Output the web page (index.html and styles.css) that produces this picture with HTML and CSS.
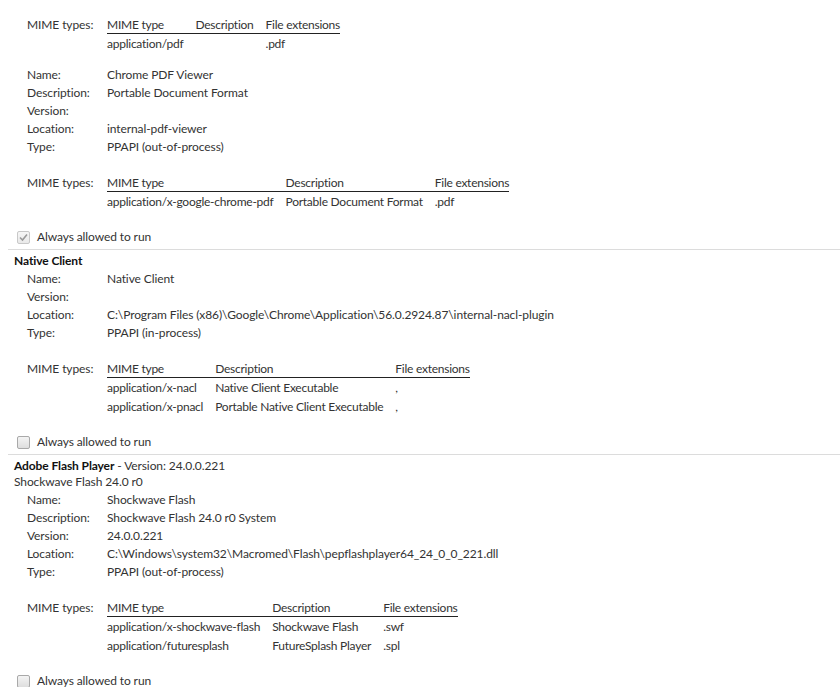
FILE: index.html
```
<!DOCTYPE html>
<html lang="en">
<head>
    <meta charset="UTF-8">
    <title>Plugins</title>
    <link rel="stylesheet" href="styles.css">
</head>
<body>
    <div class="plugin first">
        <div class="mime-row">
            <div class="label">MIME types:</div>
            <table class="mime-table">
                <tr><th>MIME type</th><th>Description</th><th>File extensions</th></tr>
                <tr><td>application/pdf</td><td></td><td>.pdf</td></tr>
            </table>
        </div>

        <div class="details">
            <div class="row"><div class="label">Name:</div><div class="value">Chrome PDF Viewer</div></div>
            <div class="row"><div class="label">Description:</div><div class="value">Portable Document Format</div></div>
            <div class="row"><div class="label">Version:</div><div class="value"></div></div>
            <div class="row"><div class="label">Location:</div><div class="value">internal-pdf-viewer</div></div>
            <div class="row"><div class="label">Type:</div><div class="value">PPAPI (out-of-process)</div></div>
        </div>

        <div class="mime-row">
            <div class="label">MIME types:</div>
            <table class="mime-table">
                <tr><th>MIME type</th><th>Description</th><th>File extensions</th></tr>
                <tr><td>application/x-google-chrome-pdf</td><td>Portable Document Format</td><td>.pdf</td></tr>
            </table>
        </div>

        <div class="allow disabled">
            <span class="check checked"><svg width="9" height="9" viewBox="0 0 9 9"><path d="M1 4.5 L3.5 7 L8 1.5" fill="none" stroke="#9a9a9a" stroke-width="1.6"/></svg></span>
            <span>Always allowed to run</span>
        </div>
    </div>

    <div class="plugin">
        <div class="title"><b>Native Client</b></div>
        <div class="details">
            <div class="row"><div class="label">Name:</div><div class="value">Native Client</div></div>
            <div class="row"><div class="label">Version:</div><div class="value"></div></div>
            <div class="row"><div class="label">Location:</div><div class="value">C:\Program Files (x86)\Google\Chrome\Application\56.0.2924.87\internal-nacl-plugin</div></div>
            <div class="row"><div class="label">Type:</div><div class="value">PPAPI (in-process)</div></div>
        </div>

        <div class="mime-row">
            <div class="label">MIME types:</div>
            <table class="mime-table">
                <tr><th>MIME type</th><th>Description</th><th>File extensions</th></tr>
                <tr><td>application/x-nacl</td><td>Native Client Executable</td><td>,</td></tr>
                <tr><td>application/x-pnacl</td><td>Portable Native Client Executable</td><td>,</td></tr>
            </table>
        </div>

        <div class="allow">
            <span class="check"></span>
            <span>Always allowed to run</span>
        </div>
    </div>

    <div class="plugin">
        <div class="title"><b>Adobe Flash Player</b> - Version: 24.0.0.221</div>
        <div class="subtitle">Shockwave Flash 24.0 r0</div>
        <div class="details">
            <div class="row"><div class="label">Name:</div><div class="value">Shockwave Flash</div></div>
            <div class="row"><div class="label">Description:</div><div class="value">Shockwave Flash 24.0 r0 System</div></div>
            <div class="row"><div class="label">Version:</div><div class="value">24.0.0.221</div></div>
            <div class="row"><div class="label">Location:</div><div class="value">C:\Windows\system32\Macromed\Flash\pepflashplayer64_24_0_0_221.dll</div></div>
            <div class="row"><div class="label">Type:</div><div class="value">PPAPI (out-of-process)</div></div>
        </div>

        <div class="mime-row">
            <div class="label">MIME types:</div>
            <table class="mime-table">
                <tr><th>MIME type</th><th>Description</th><th>File extensions</th></tr>
                <tr><td>application/x-shockwave-flash</td><td>Shockwave Flash</td><td>.swf</td></tr>
                <tr><td>application/futuresplash</td><td>FutureSplash Player</td><td>.spl</td></tr>
            </table>
        </div>

        <div class="allow">
            <span class="check"></span>
            <span>Always allowed to run</span>
        </div>
    </div>
</body>
</html>
```

FILE: styles.css
```
body {
    font-family: Lato, "Liberation Sans", sans-serif;
    font-size: 12px;
    letter-spacing: -0.1px;
    color: #333;
    background-color: #fff;
    margin: 0;
    padding: 0 0 0 8px;
}
.plugin {
    border-top: 1px solid #dcdcdc;
    padding: 3px 0 3px 6px;
}
.plugin.first {
    border-top: none;
    padding-top: 17px;
}
.title, .subtitle {
    line-height: 16px;
    color: #333;
}
.title b {
    color: #111;
}
.details {
    margin: 1px 0 0 13px;
}
.first .details {
    margin-top: 13px;
}
.row {
    display: flex;
    line-height: 18px;
    height: 18px;
}
.label {
    width: 80px;
    flex-shrink: 0;
}
.value {
    white-space: nowrap;
}
.mime-row {
    display: flex;
    margin: 19px 0 0 13px;
}
.first .mime-row:first-child {
    margin-top: 0;
}
.mime-row .label {
    line-height: 16px;
}
.mime-table {
    border-collapse: collapse;
    border-spacing: 0;
    letter-spacing: -0.25px;
}
.mime-table th {
    font-weight: normal;
    text-align: left;
    line-height: 16px;
    padding: 0 12px 0 0;
    border-bottom: 1px solid #222;
    white-space: nowrap;
}
.mime-table td {
    line-height: 16px;
    padding: 2px 12px 1px 0;
    white-space: nowrap;
}
.mime-table th:last-child,
.mime-table td:last-child {
    padding-right: 0;
}
.allow {
    display: flex;
    align-items: center;
    height: 18px;
    line-height: 18px;
    margin: 17px 0 0 3px;
}
.check {
    width: 11px;
    height: 11px;
    border: 1px solid #a9a9a9;
    border-radius: 2px;
    background: linear-gradient(#f4f4f4, #dedede);
    margin-right: 7px;
    display: flex;
    align-items: center;
    justify-content: center;
}
.check.checked {
    background: linear-gradient(#f6f6f6, #e9e9e9);
    border-color: #c8c8c8;
}
```
